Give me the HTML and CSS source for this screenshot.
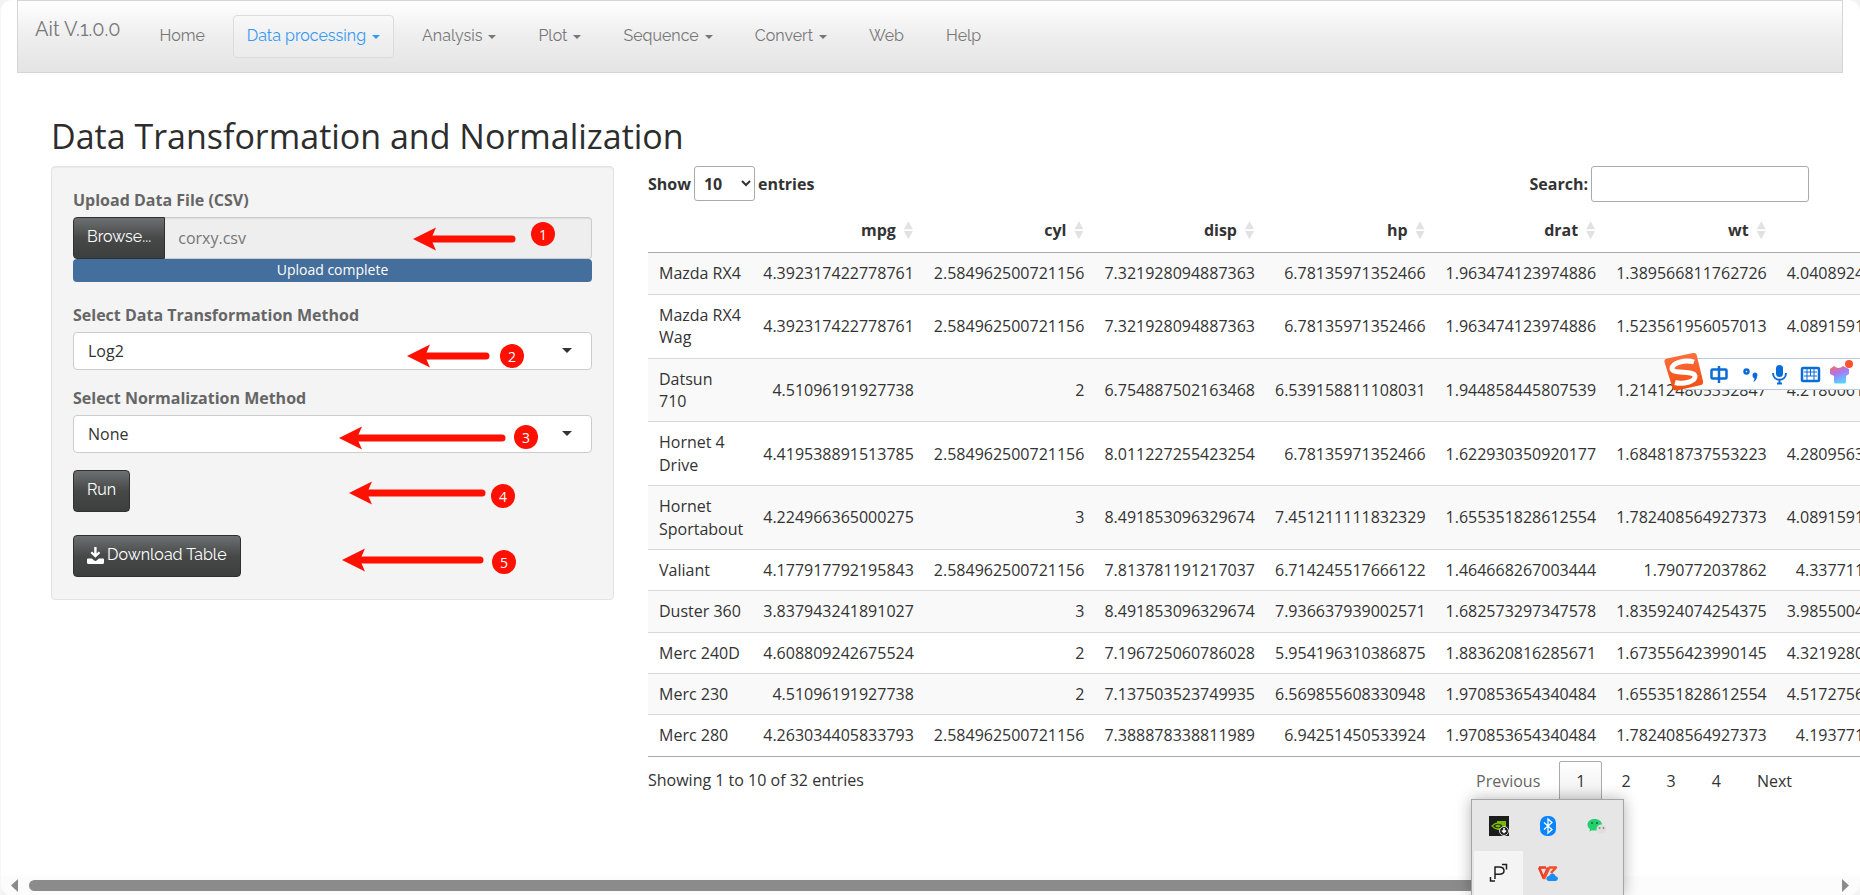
FILE: index.html
```html
<!DOCTYPE html>
<html lang="en">
<head>
<meta charset="utf-8">
<title>Ait V.1.0.0</title>
<link rel="stylesheet" href="styles.css">
</head>
<body>
<div class="page">
  <nav class="navbar">
    <a class="brand" href="#">Ait V.1.0.0</a>
    <ul class="nav">
      <li><a href="#">Home</a></li>
      <li><a href="#" class="active">Data processing <span class="caret"></span></a></li>
      <li><a href="#">Analysis <span class="caret"></span></a></li>
      <li><a href="#">Plot <span class="caret"></span></a></li>
      <li><a href="#">Sequence <span class="caret"></span></a></li>
      <li><a href="#">Convert <span class="caret"></span></a></li>
      <li><a href="#">Web</a></li>
      <li><a href="#">Help</a></li>
    </ul>
  </nav>

  <main class="content">
    <h2 class="title">Data Transformation and Normalization</h2>
    <div class="layout">
      <form class="well">
        <div class="field">
          <label for="file">Upload Data File (CSV)</label>
          <div class="file-row">
            <button type="button" class="btn btn-browse">Browse...</button>
            <input id="file" class="file-name" type="text" value="corxy.csv" readonly>
          </div>
          <div class="progress">Upload complete</div>
        </div>
        <div class="field">
          <label for="transform">Select Data Transformation Method</label>
          <div class="picker"><select id="transform"><option>Log2</option></select></div>
        </div>
        <div class="field">
          <label for="norm">Select Normalization Method</label>
          <div class="picker"><select id="norm"><option>None</option></select></div>
        </div>
        <button type="button" class="btn">Run</button>
        <button type="button" class="btn btn-download">
          <svg width="17" height="17" viewBox="0 0 17 17" fill="#fff" aria-hidden="true"><path d="M7.2 0h2.4v6.6l2.2-2.1 1.5 1.5-4.9 4.8L3.5 6 5 4.500l2.200 2.100z"/><path d="M0 12.400q0-1 1-1h3.900l2 1.900q1.500 1.200 3 0l2-1.900H16q1 0 1 1v3.100q0 1.500-1.500 1.500h-14Q0 17 0 15.500z"/></svg>
          Download Table
        </button>
        <svg class="marks" width="562" height="434" viewBox="0 0 562 434" aria-hidden="true">
          <defs><path id="head" d="M0 0L23-11.500L18 0L23 11.500z"/></defs>
          <g class="mark-lines">
            <path d="M379 72H460"/><path d="M373 189H434"/><path d="M305 271H450"/><path d="M315 326H430"/><path d="M308 393H428"/>
          </g>
          <g class="mark-fill">
            <use href="#head" x="361" y="72"/><use href="#head" x="355" y="189"/><use href="#head" x="287" y="271"/><use href="#head" x="297" y="326"/><use href="#head" x="290" y="393"/>
            <circle cx="491" cy="67" r="12"/><circle cx="460" cy="189" r="12"/><circle cx="474" cy="270" r="12"/><circle cx="451" cy="329" r="12"/><circle cx="452" cy="395" r="12"/>
          </g>
          <g class="mark-text">
            <text x="491" y="73">1</text><text x="460" y="195">2</text><text x="474" y="276">3</text><text x="451" y="335">4</text><text x="452" y="401">5</text>
          </g>
        </svg>
      </form>

      <section class="results">
        <div class="toolbar">
          <label class="length">Show <select><option>10</option></select> entries</label>
          <label class="search">Search: <input type="search"></label>
        </div>
        <table class="grid">
          <thead>
            <tr><th></th><th><span class="sort">mpg</span></th><th><span class="sort">cyl</span></th><th><span class="sort">disp</span></th><th><span class="sort">hp</span></th><th><span class="sort">drat</span></th><th><span class="sort">wt</span></th><th><span class="sort">qsec</span></th></tr>
          </thead>
          <tbody>
            <tr><td>Mazda RX4</td><td>4.392317422778761</td><td>2.584962500721156</td><td>7.321928094887363</td><td>6.78135971352466</td><td>1.963474123974886</td><td>1.389566811762726</td><td>4.040892430953402</td></tr>
            <tr><td>Mazda RX4 Wag</td><td>4.392317422778761</td><td>2.584962500721156</td><td>7.321928094887363</td><td>6.78135971352466</td><td>1.963474123974886</td><td>1.523561956057013</td><td>4.089159131911237</td></tr>
            <tr><td>Datsun 710</td><td>4.51096191927738</td><td>2</td><td>6.754887502163468</td><td>6.539158811108031</td><td>1.944858445807539</td><td>1.214124805352847</td><td>4.218006195783412</td></tr>
            <tr><td>Hornet 4 Drive</td><td>4.419538891513785</td><td>2.584962500721156</td><td>8.011227255423254</td><td>6.78135971352466</td><td>1.622930350920177</td><td>1.684818737553223</td><td>4.280956313642512</td></tr>
            <tr><td>Hornet Sportabout</td><td>4.224966365000275</td><td>3</td><td>8.491853096329674</td><td>7.451211111832329</td><td>1.655351828612554</td><td>1.782408564927373</td><td>4.089159131911237</td></tr>
            <tr><td>Valiant</td><td>4.177917792195843</td><td>2.584962500721156</td><td>7.813781191217037</td><td>6.714245517666122</td><td>1.464668267003444</td><td>1.790772037862</td><td>4.33771128310487</td></tr>
            <tr><td>Duster 360</td><td>3.837943241891027</td><td>3</td><td>8.491853096329674</td><td>7.936637939002571</td><td>1.682573297347578</td><td>1.835924074254375</td><td>3.985500430304885</td></tr>
            <tr><td>Merc 240D</td><td>4.608809242675524</td><td>2</td><td>7.196725060786028</td><td>5.954196310386875</td><td>1.883620816285671</td><td>1.673556423990145</td><td>4.321928094887363</td></tr>
            <tr><td>Merc 230</td><td>4.51096191927738</td><td>2</td><td>7.137503523749935</td><td>6.569855608330948</td><td>1.970853654340484</td><td>1.655351828612554</td><td>4.517275693307613</td></tr>
            <tr><td>Merc 280</td><td>4.263034405833793</td><td>2.584962500721156</td><td>7.388878338811989</td><td>6.94251450533924</td><td>1.970853654340484</td><td>1.782408564927373</td><td>4.19377174339745</td></tr>
          </tbody>
        </table>
        <div class="footer">
          <div class="info">Showing 1 to 10 of 32 entries</div>
          <div class="pager">
            <a href="#" class="disabled">Previous</a><a href="#" class="current">1</a><a href="#">2</a><a href="#">3</a><a href="#">4</a><a href="#">Next</a>
          </div>
        </div>
      </section>
    </div>
  </main>

  <div class="hscroll">
    <svg width="7" height="13" viewBox="0 0 7 13" aria-hidden="true"><path d="M7 0V13L0 6.500z" fill="#8b8b8b"/></svg>
    <div class="track"><div class="thumb"></div></div>
    <svg width="7" height="13" viewBox="0 0 7 13" aria-hidden="true"><path d="M0 0V13L7 6.500z" fill="#8b8b8b"/></svg>
  </div>
</div>

<div class="ime">
  <svg class="ime-logo" width="42" height="42" viewBox="0 0 42 42" aria-hidden="true">
    <defs><linearGradient id="sg" x1="0" y1="0" x2="0" y2="1"><stop offset="0" stop-color="#fb7040"/><stop offset="1" stop-color="#f24b10"/></linearGradient></defs>
    <path d="M4 7.500L30 2q3-.6 3.700 2L40 30q.7 3-2 4L14 39.500q-3.500.6-4.500-2.500L1.500 11q-.6-3 2.500-3.500z" fill="url(#sg)"/>
    <path d="M31 11C22 8 9 12 9 17.500c0 6 22 1.500 23 7.500 .8 5-11 9-20 6.500" fill="none" stroke="#fff" stroke-width="5"/>
  </svg>
  <svg width="154" height="31" viewBox="0 0 154 31" aria-hidden="true">
    <g fill="none" stroke="#0a6cd6" stroke-width="2.500">
      <rect x="5.500" y="10.500" width="15" height="9" rx="1"/><path d="M13 7v17"/>
      <circle cx="40.500" cy="12.500" r="2"/>
      <path d="M67 14c0 9 13 9 13 0M73.500 21v4M71 24.500h5" stroke-width="2"/>
      <rect x="96" y="9" width="17" height="13" rx="1"/>
      <path d="M98 13h13M98 17h13M101 10v7M104.500 10v7M108 10v7M101 17v4M108 17v4" stroke-width="1"/>
    </g>
    <path d="M46.500 16a2.500 2.500 0 1 1 4.500 1.500c0 3-1.500 4.500-4 5.500 1.200-1.500 1.500-2.500 1.500-3.500-1.200-.5-2-1.500-2-3.500z" fill="#0a6cd6"/>
    <rect x="70" y="6" width="7" height="12" rx="3.500" fill="#0a6cd6"/>
    <defs><linearGradient id="shirt" x1="0" y1="0" x2=".4" y2="1"><stop offset="0" stop-color="#ff6a48"/><stop offset=".5" stop-color="#a878f5"/><stop offset="1" stop-color="#58d0ff"/></linearGradient></defs>
    <path d="M128 7q4.500 4 9 0l6 3v5l-3 2v6q0 1.500-2 1.500h-8q-2 0-2-1.500v-6l-4-2v-5z" fill="url(#shirt)"/>
    <circle cx="143" cy="5" r="4" fill="#ff5030"/>
  </svg>
</div>

<div class="tray">
  <div class="tray-item">
    <svg width="20" height="20" viewBox="0 0 20 20" aria-hidden="true"><path d="M0 0h20v20H0z" fill="#1c1c1c"/><path d="M8 5h9v9H8z" fill="#76b900"/><path d="M3 10q6-6 12 0-6 6-12 0z" fill="#1c1c1c" stroke="#76b900" stroke-width="1.300"/><path d="M6 10q3-3 6 0-3 3-6 0z" fill="#76b900"/><circle cx="15" cy="15" r="4.500" fill="#222" stroke="#ddd"/><path d="M15 12v4M13 14.500l2 2 2-2" stroke="#fff" fill="none" stroke-width="1.500"/></svg>
  </div>
  <div class="tray-item">
    <svg width="16" height="20" viewBox="0 0 16 20" aria-hidden="true"><rect width="16" height="20" rx="7" fill="#0a84ff"/><path d="M4 6.500l8 7L8 17V3l4 3.500-8 7" fill="none" stroke="#fff" stroke-width="1.300"/></svg>
  </div>
  <div class="tray-item">
    <svg width="20" height="18" viewBox="0 0 20 18" aria-hidden="true"><path d="M7.500 2C3 2 .5 4.500 .5 7.500c0 2 1 3.700 2.500 4.800L2.500 14.500 5 13.300c5 .9 11-1.300 10-5.800 0-3-3-5.500-7.500-5.500z" fill="#24cf6e"/><circle cx="5" cy="6" r="1" fill="#17683c"/><circle cx="10" cy="6" r="1" fill="#17683c"/><ellipse cx="14.500" cy="12" rx="5" ry="4.500" fill="#dedede"/><circle cx="12.500" cy="11" r="1" fill="#888"/><circle cx="16.500" cy="11" r="1" fill="#888"/></svg>
  </div>
  <div class="tray-item hover">
    <svg width="20" height="20" viewBox="0 0 20 20" fill="none" stroke="#1f1f1f" stroke-width="1.500" aria-hidden="true"><path d="M6 16V4h4q5 0 5 3.700T10 11.300H6"/><path d="M1.500 14v4H6M13 1.500h4.500v5"/></svg>
  </div>
  <div class="tray-item">
    <svg width="21" height="17" viewBox="0 0 21 17" aria-hidden="true"><path d="M2 2.500L6.500 13 11 2.500M2 2.500h7" fill="none" stroke="#f23a22" stroke-width="2.500" stroke-linejoin="round"/><path d="M7 14L12.500 2.500H19L14 8" fill="none" stroke="#f4502a" stroke-width="2.500" stroke-linejoin="round"/><path d="M12 16q-3-.5-2.500-3 .5-2 2.500-2 1-3 4-2.500 2 .5 2.500 2.500 2.500.5 2.500 2.500T18.500 16z" fill="#1c8df0"/></svg>
  </div>
</div>
</body>
</html>
```
FILE: styles.css
```css
* { box-sizing: border-box; }

body {
  margin: 0;
  background: #f3f3f3;
  color: #333;
  font-family: "Open Sans", "Noto Sans", sans-serif;
  font-size: 16px;
  line-height: 1.4;
  overflow: hidden;
}

a { text-decoration: none; color: inherit; }
input, select, button { font: inherit; color: inherit; }

.page {
  min-height: 100vh;
  display: flex;
  flex-direction: column;
  background: #fff;
  border-left: 1px solid #f7f7f7;
  border-radius: 12px;
  overflow: hidden;
}

.navbar {
  display: flex;
  align-items: flex-start;
  margin: 0 17px 0 16px;
  height: 73px;
  border: 1px solid #d5d5d5;
  background: linear-gradient(#fff, #eee 50%, #e4e4e4);
  font-family: Raleway, Lato, sans-serif;
  color: #777;
}
.brand { padding: 14px 17px; font-size: 20px; line-height: 28px; }
.nav { display: flex; gap: 14px; margin: 14px 0 0 8px; padding: 0; list-style: none; }
.nav a {
  display: flex;
  align-items: center;
  gap: 6px;
  height: 43px;
  padding: 0 13px 1px;
  border: 1px solid transparent;
  border-radius: 4px;
}
.nav .active { color: #3399f3; border-color: #dcdcdc; background: rgba(255, 255, 255, .15); }
.caret { border: 4px solid transparent; border-top-color: currentColor; border-bottom: 0; margin-top: 2px; }

.content { flex: 1; padding: 39px 51px 0 50px; }
.title { margin: 0; color: #2d2d2d; font-size: 34px; font-weight: 400; line-height: 48px; padding-bottom: 6px; }

.layout {
  display: grid;
  grid-template-columns: minmax(0, 563fr) minmax(0, 1161fr);
  gap: 34px;
  align-items: start;
}

.well {
  position: relative;
  padding: 22px 21px;
  border: 1px solid #e3e3e3;
  border-radius: 4px;
  background: #f4f4f4;
  box-shadow: inset 0 1px 1px rgba(0, 0, 0, .05);
}
.field { margin-bottom: 17px; }
.field:first-child { margin-bottom: 22px; }
.field label { display: block; margin-bottom: 6px; color: #666; font-weight: 700; line-height: 22px; }
.file-row { display: flex; height: 42px; }
.file-name {
  flex: 1;
  min-width: 0;
  padding: 0 13px;
  border: 1px solid #ccc;
  border-left: 0;
  border-radius: 0 4px 4px 0;
  background: #eee;
  color: #777;
  box-shadow: inset 0 1px 1px rgba(0, 0, 0, .08);
}
.progress {
  height: 23px;
  border-radius: 4px;
  background: #446e9b;
  color: #fff;
  font-size: 14px;
  line-height: 22px;
  text-align: center;
}
.picker { position: relative; }
.picker select {
  display: block;
  width: 100%;
  height: 38px;
  padding: 0 14px;
  border: 1px solid #ccc;
  border-radius: 4px;
  background: #fff;
  appearance: none;
}
.picker::after {
  content: "";
  position: absolute;
  right: 20px;
  top: 16px;
  border: 5px solid transparent;
  border-top-color: #333;
  border-bottom: 0;
}
.btn {
  display: flex;
  align-items: center;
  gap: 3px;
  height: 42px;
  padding: 0 13px 1px;
  border: 1px solid #2f3030;
  border-radius: 4px;
  background: linear-gradient(#6d7070, #474949 50%, #3d3f3f);
  color: #fff;
  font-family: Raleway, Lato, sans-serif;
}
.btn-browse { border-radius: 4px 0 0 4px; }
.btn-download { margin-top: 23px; }

.marks { position: absolute; left: 0; top: 0; }
.mark-lines { stroke: #ff1000; stroke-width: 7; stroke-linecap: round; }
.mark-fill { fill: #ff1000; }
.mark-text { fill: #fff; font-size: 14px; text-anchor: middle; }

.toolbar { display: flex; justify-content: space-between; height: 42px; font-weight: 700; line-height: 36px; }
.toolbar label { display: flex; gap: 3px; }
.length select {
  width: 61px;
  height: 35px;
  padding: 0 5px;
  border: 1px solid #aaa;
  border-radius: 3px;
  background: transparent;
}
.search input {
  width: 218px;
  height: 36px;
  padding: 5px;
  border: 1px solid #aaa;
  border-radius: 3px;
  background: transparent;
}

.grid { border-collapse: collapse; width: 100%; }
.grid th { padding: 11px 10px; border-bottom: 1px solid #aaa; font-weight: 700; text-align: right; }
.grid td { padding: 9px 10px; border-bottom: 1px solid #d8d8d8; text-align: right; }
.grid td:first-child { padding-left: 11px; text-align: left; }
.grid tbody tr:nth-child(odd) { background: #f9f9f9; }
.grid tbody tr:last-child td { border-bottom-color: #aaa; }
.sort { display: inline-flex; align-items: center; gap: 8px; margin-right: 1px; }
.sort::after {
  content: "";
  width: 9px;
  height: 18px;
  background: #e2e2e2;
  clip-path: polygon(50% 0, 100% 45%, 0 45%, 0 55%, 100% 55%, 50% 100%, 0 55%, 0 45%);
}

.footer { display: flex; justify-content: space-between; padding-top: 4px; }
.info { padding-top: 8px; }
.pager { display: flex; gap: 2px; }
.pager a { padding: 7px 16px 9px; border: 1px solid transparent; border-radius: 2px; line-height: 24px; }
.pager .disabled { color: #666; }
.pager .current { border-color: #aaa; background: linear-gradient(#fff, #eee); }

.hscroll { display: flex; align-items: center; gap: 11px; height: 19px; padding: 0 11px 0 10px; background: #fcfcfc; }
.track { flex: 1; }
.thumb { width: 81%; height: 11px; border-radius: 6px; background: #8b8b8b; }

.ime {
  position: fixed;
  right: 0;
  top: 358px;
  width: 176px;
  height: 32px;
  padding-left: 22px;
  border: 1px solid #b8cbe0;
  border-width: 1px 0;
  background: #fff;
}
.ime svg { overflow: visible; }
.ime-logo { position: absolute; left: -21px; top: -8px; }

.tray {
  position: fixed;
  right: 236px;
  bottom: 0;
  display: grid;
  grid-template-columns: repeat(3, 49px);
  grid-template-rows: 51px 44px;
  padding: 0 2px;
  border: 1px solid #a5a5a5;
  border-bottom: 0;
  background: #e6e6e6;
  box-shadow: 0 0 14px rgba(0, 0, 0, .3);
}
.tray-item { display: flex; align-items: center; justify-content: center; }
.tray-item.hover { background: #f4f4f4; }
```
